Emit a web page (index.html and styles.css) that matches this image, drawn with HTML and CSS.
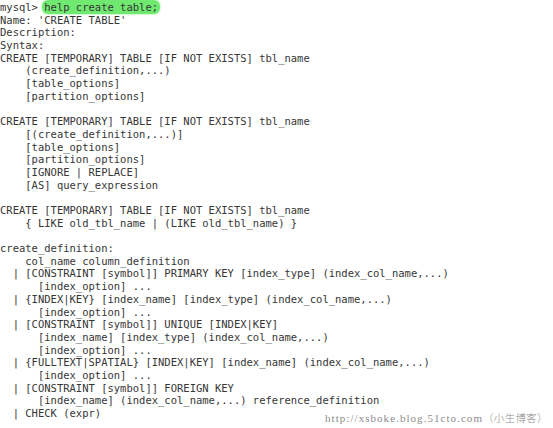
FILE: index.html
```html
<!DOCTYPE html>
<html>
<head>
<meta charset="utf-8">
<link rel="stylesheet" href="styles.css">
</head>
<body>
<div class="terminal">
<pre class="output">mysql&gt; <span class="hl">help create table;</span>
Name: 'CREATE TABLE'
Description:
Syntax:
CREATE [TEMPORARY] TABLE [IF NOT EXISTS] tbl_name
    (create_definition,...)
    [table_options]
    [partition_options]

CREATE [TEMPORARY] TABLE [IF NOT EXISTS] tbl_name
    [(create_definition,...)]
    [table_options]
    [partition_options]
    [IGNORE | REPLACE]
    [AS] query_expression

CREATE [TEMPORARY] TABLE [IF NOT EXISTS] tbl_name
    { LIKE old_tbl_name | (LIKE old_tbl_name) }

create_definition:
    col_name column_definition
  | [CONSTRAINT [symbol]] PRIMARY KEY [index_type] (index_col_name,...)
      [index_option] ...
  | {INDEX|KEY} [index_name] [index_type] (index_col_name,...)
      [index_option] ...
  | [CONSTRAINT [symbol]] UNIQUE [INDEX|KEY]
      [index_name] [index_type] (index_col_name,...)
      [index_option] ...
  | {FULLTEXT|SPATIAL} [INDEX|KEY] [index_name] (index_col_name,...)
      [index_option] ...
  | [CONSTRAINT [symbol]] FOREIGN KEY
      [index_name] (index_col_name,...) reference_definition
  | CHECK (expr)</pre>
<div class="watermark"><span class="wm-url">http://xsboke.blog.51cto.com</span><span class="wm-cjk">（小生博客）</span></div>
</div>
</body>
</html>
```
FILE: styles.css
```css
html, body {
  margin: 0;
  padding: 0;
  background: #ffffff;
}
.terminal {
  position: relative;
  width: 553px;
  height: 428px;
  overflow: hidden;
}
.output {
  margin: 0;
  padding: 1px 0 0 0;
  font-family: "DejaVu Sans Mono", monospace;
  font-size: 10.5px;
  line-height: 12.69px;
  color: #363636;
}
.hl {
  background: #70e970;
  border-radius: 6px;
  padding: 1px 2px;
  margin: 0 -2px;
  box-shadow: 0 0 2px #70e970;
}
.watermark {
  position: absolute;
  left: 325px;
  top: 410px;
  display: flex;
  align-items: baseline;
  white-space: nowrap;
  color: #8c8c8c;
}
.wm-url {
  font-family: "Liberation Serif", serif;
  font-size: 11px;
  letter-spacing: 1.05px;
}
.wm-cjk {
  font-family: "Noto Sans CJK SC", sans-serif;
  font-size: 10.5px;
  font-weight: 300;
  letter-spacing: 0.3px;
}
```
